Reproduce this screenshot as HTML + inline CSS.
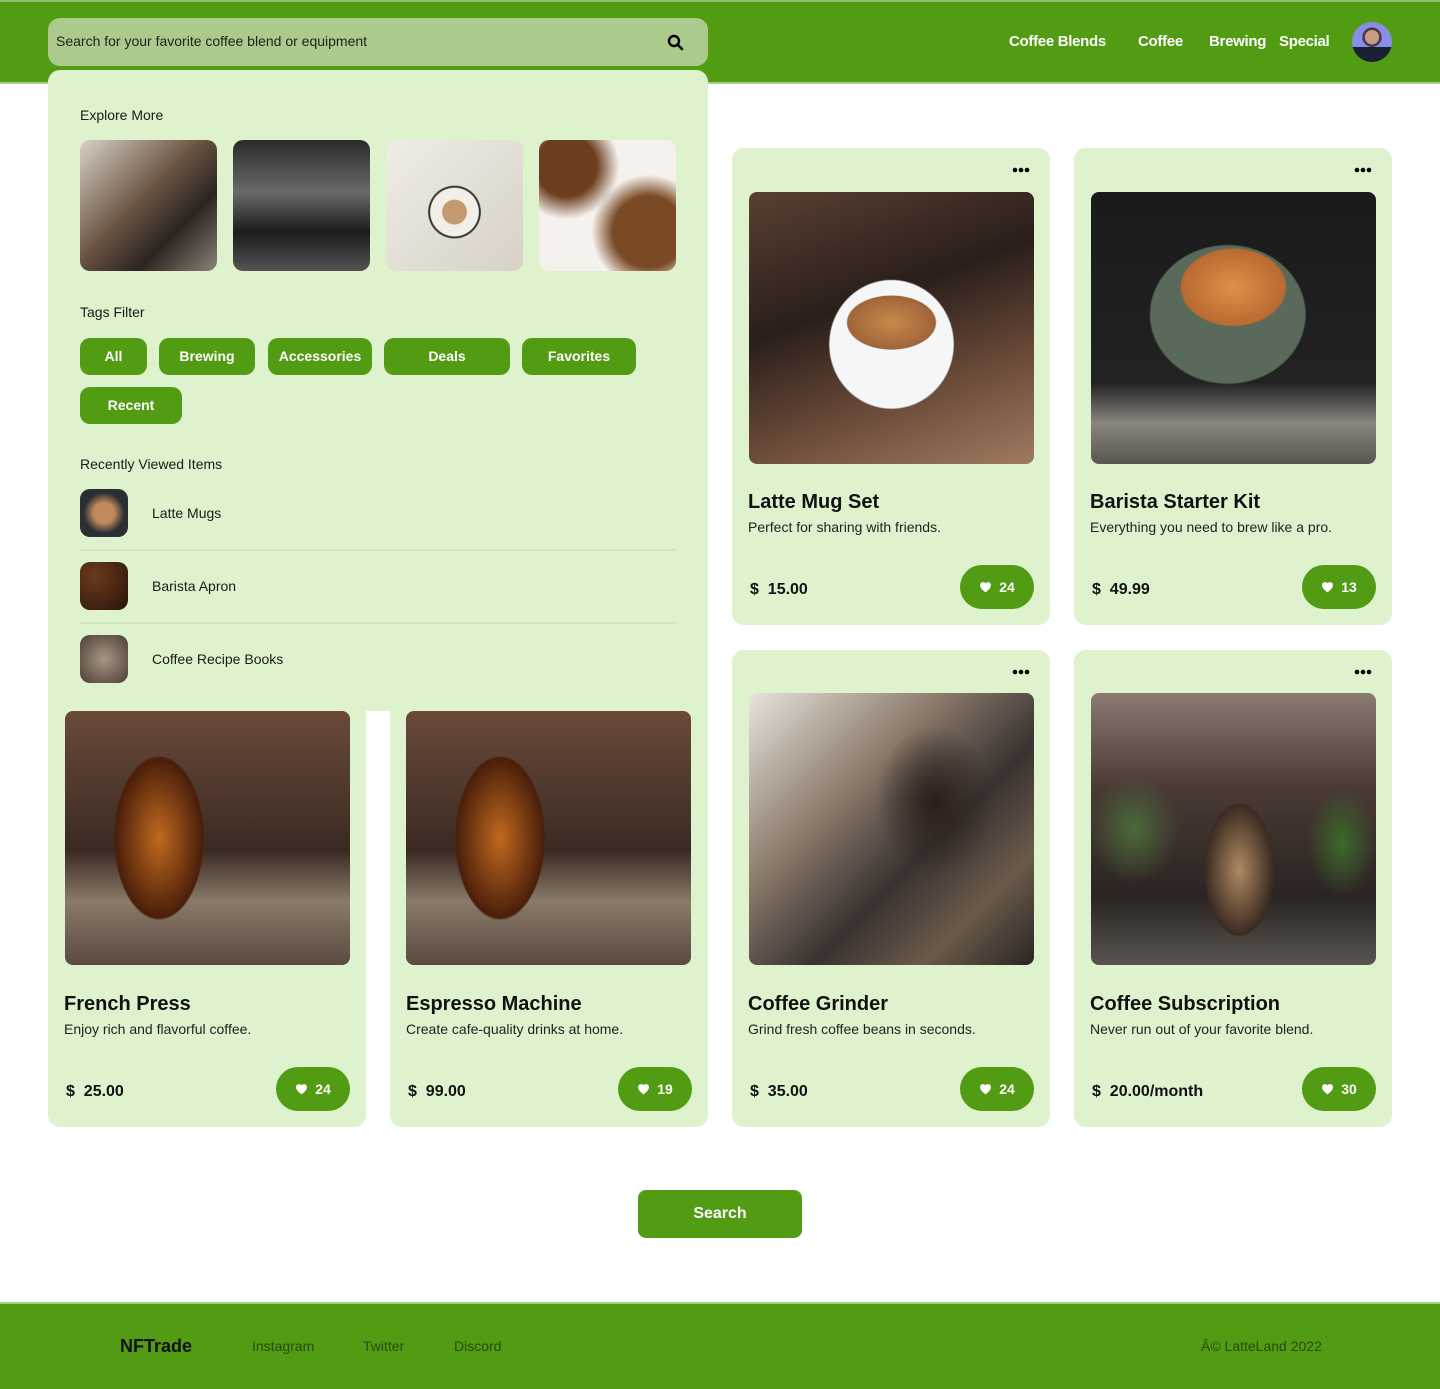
<!DOCTYPE html>
<html><head><meta charset="utf-8"><style>
*{margin:0;padding:0;box-sizing:border-box}
body{width:1440px;height:1389px;position:relative;background:#fff;font-family:"Liberation Sans",Arial,sans-serif;color:#111;overflow:hidden}
.a{position:absolute}
.hdr{left:0;top:0;width:1440px;height:84px;background:#519c13;border-top:2px solid #8fc26a;border-bottom:2px solid #a7cf8a}
.search{left:48px;top:18px;width:660px;height:48px;background:#abca8c;border-radius:12px;font-size:14px;padding:15px 8px;color:#222}
.nav{top:33px;font-size:15px;font-weight:bold;color:#fff;letter-spacing:-0.3px}
.panel{left:48px;top:70px;width:660px;height:641px;background:#def2cd;border-radius:12px 12px 0 0}
.lbl{font-size:14px;color:#1a1a1a}
.ex{width:137px;height:131px;top:140px;border-radius:10px}
.tag{height:37px;background:#519c13;color:#fff;font-weight:bold;font-size:14px;border-radius:10px;text-align:center;line-height:37px}
.rv{left:80px;width:48px;height:48px;border-radius:10px}
.sep{left:80px;width:596px;height:2px;background:#d3e6c3}
.card{width:318px;height:477px;background:#def2cd;border-radius:12px}
.img{left:17px;top:44px;width:285px;height:272px;border-radius:8px}
.dots{right:20px;top:19px}
.t{left:16px;top:343px;font-size:20px;font-weight:bold}
.d{left:16px;top:371px;font-size:14px;color:#222}
.p{left:18px;top:433px;font-size:16px;font-weight:bold;color:#111}
.like{right:16px;top:417px;width:74px;height:44px;border-radius:22px;background:#519c13;color:#fff;font-weight:bold;font-size:14px;display:flex;align-items:center;justify-content:center;gap:7px}
.ft{top:1302px;left:0;width:1440px;height:87px;background:#519c13;border-top:2px solid #a7cf8a}
.fl{top:1338px;font-size:14px;color:#2a4a10}
</style></head><body>
<div class="a hdr"></div>
<div class="a search">Search for your favorite coffee blend or equipment
<svg class="a" style="right:24px;top:16px" width="17" height="17" viewBox="0 0 17 17"><circle cx="7" cy="7" r="5" fill="none" stroke="#000" stroke-width="2.4"/><path d="M10.5 10.5l4.5 4.5" stroke="#000" stroke-width="2.6" stroke-linecap="round"/></svg></div>
<div class="a nav" style="left:1009px">Coffee Blends</div>
<div class="a nav" style="left:1138px">Coffee</div>
<div class="a nav" style="left:1209px">Brewing</div>
<div class="a nav" style="left:1279px">Special</div>
<div class="a" style="left:1352px;top:22px;width:40px;height:40px;border-radius:50%;background:radial-gradient(circle at 50% 38%,#c89a86 0 22%,#4a3a48 23% 30%,transparent 31%),linear-gradient(180deg,#8a8de8 0 62%,#1b1f33 63%)"></div>

<div class="a panel">
<div class="a lbl" style="left:32px;top:37px">Explore More</div>
<div class="a ex" style="left:32px;top:70px;background:linear-gradient(135deg,#d9d2c6,#6b5443 45%,#2b2420 70%,#8a8478)"></div>
<div class="a ex" style="left:185px;top:70px;background:linear-gradient(180deg,#2a2a2a,#6a6a6a 40%,#1b1b1b 70%,#545454)"></div>
<div class="a ex" style="left:338px;top:70px;background:radial-gradient(circle at 50% 55%,#c49a70 0 12%,#f3efe8 13% 24%,#333 25% 26%,transparent 27%),linear-gradient(135deg,#efece6,#d8d2c6)"></div>
<div class="a ex" style="left:491px;top:70px;background:radial-gradient(circle at 80% 70%,#7a4a24 0 25%,transparent 40%),radial-gradient(circle at 20% 20%,#6b3f1e 0 20%,transparent 35%),#f5f2ee"></div>
<div class="a lbl" style="left:32px;top:234px">Tags Filter</div>
<div class="a tag" style="left:32px;top:268px;width:67px">All</div>
<div class="a tag" style="left:111px;top:268px;width:96px">Brewing</div>
<div class="a tag" style="left:220px;top:268px;width:104px">Accessories</div>
<div class="a tag" style="left:336px;top:268px;width:126px">Deals</div>
<div class="a tag" style="left:474px;top:268px;width:114px">Favorites</div>
<div class="a tag" style="left:32px;top:317px;width:102px">Recent</div>
<div class="a lbl" style="left:32px;top:386px">Recently Viewed Items</div>
</div>
<div class="a rv" style="top:489px;background:radial-gradient(circle,#c08a5c 0 30%,#2a2f33 60%)"></div>
<div class="a lbl" style="left:152px;top:505px">Latte Mugs</div>
<div class="a sep" style="top:549px"></div>
<div class="a rv" style="top:562px;background:radial-gradient(circle at 30% 30%,#6b3a1e,#2a140a)"></div>
<div class="a lbl" style="left:152px;top:578px">Barista Apron</div>
<div class="a sep" style="top:622px"></div>
<div class="a rv" style="top:635px;background:radial-gradient(circle,#a89684,#4a3e34)"></div>
<div class="a lbl" style="left:152px;top:651px">Coffee Recipe Books</div>

<div class="a card" style="left:48px;top:650px;clip-path:inset(61px 0 0 0)">
<div class="a img" style="top:61px;height:254px;background:radial-gradient(ellipse 22% 45% at 33% 50%,#c06a1e,#4a1e0a 70%,transparent 72%),linear-gradient(180deg,#6a4a3a,#3a2a22 55%,#8a7a6a 75%,#5a4a40)"></div>
<div class="a t">French Press</div><div class="a d">Enjoy rich and flavorful coffee.</div>
<div class="a p">$ &nbsp;25.00</div><div class="a like"><svg width="13" height="12" viewBox="0 0 24 22"><path d="M12 21l-1.5-1.3C5 15 2 12.2 2 7.5 2 4.4 4.4 2 7.5 2c1.7 0 3.4.8 4.5 2.1C13.1 2.8 14.8 2 16.5 2 19.6 2 22 4.4 22 7.5c0 4.7-3 7.5-8.5 12.2z" fill="#fff"/></svg>24</div></div>
<div class="a card" style="left:390px;top:650px;clip-path:inset(61px 0 0 0)">
<div class="a img" style="left:16px;top:61px;height:254px;background:radial-gradient(ellipse 22% 45% at 33% 50%,#c06a1e,#4a1e0a 70%,transparent 72%),linear-gradient(180deg,#6a4a3a,#3a2a22 55%,#8a7a6a 75%,#5a4a40)"></div>
<div class="a t">Espresso Machine</div><div class="a d">Create cafe-quality drinks at home.</div>
<div class="a p">$ &nbsp;99.00</div><div class="a like"><svg width="13" height="12" viewBox="0 0 24 22"><path d="M12 21l-1.5-1.3C5 15 2 12.2 2 7.5 2 4.4 4.4 2 7.5 2c1.7 0 3.4.8 4.5 2.1C13.1 2.8 14.8 2 16.5 2 19.6 2 22 4.4 22 7.5c0 4.7-3 7.5-8.5 12.2z" fill="#fff"/></svg>19</div></div>

<div class="a card" style="left:732px;top:148px">
<svg class="a dots" width="18" height="6"><circle cx="3" cy="3" r="2.3"/><circle cx="9" cy="3" r="2.3"/><circle cx="15" cy="3" r="2.3"/></svg>
<div class="a img" style="background:radial-gradient(ellipse 22% 14% at 50% 48%,#c88a4a,#a0643a 70%,transparent 72%),radial-gradient(ellipse 24% 26% at 50% 56%,#f4f6f8 0 90%,transparent 92%),linear-gradient(160deg,#5a4032,#2a1e1a 40%,#6a4a38 70%,#a07a60)"></div>
<div class="a t">Latte Mug Set</div><div class="a d">Perfect for sharing with friends.</div>
<div class="a p">$ &nbsp;15.00</div><div class="a like"><svg width="13" height="12" viewBox="0 0 24 22"><path d="M12 21l-1.5-1.3C5 15 2 12.2 2 7.5 2 4.4 4.4 2 7.5 2c1.7 0 3.4.8 4.5 2.1C13.1 2.8 14.8 2 16.5 2 19.6 2 22 4.4 22 7.5c0 4.7-3 7.5-8.5 12.2z" fill="#fff"/></svg>24</div></div>
<div class="a card" style="left:1074px;top:148px">
<svg class="a dots" width="18" height="6"><circle cx="3" cy="3" r="2.3"/><circle cx="9" cy="3" r="2.3"/><circle cx="15" cy="3" r="2.3"/></svg>
<div class="a img" style="background:radial-gradient(ellipse 26% 20% at 50% 35%,#e0904a,#b86a30 70%,transparent 72%),radial-gradient(ellipse 30% 28% at 48% 45%,#5a6a5a 0 90%,transparent 92%),linear-gradient(180deg,#1a1a1a,#222 70%,#8a847e 85%,#5a5550)"></div>
<div class="a t">Barista Starter Kit</div><div class="a d">Everything you need to brew like a pro.</div>
<div class="a p">$ &nbsp;49.99</div><div class="a like"><svg width="13" height="12" viewBox="0 0 24 22"><path d="M12 21l-1.5-1.3C5 15 2 12.2 2 7.5 2 4.4 4.4 2 7.5 2c1.7 0 3.4.8 4.5 2.1C13.1 2.8 14.8 2 16.5 2 19.6 2 22 4.4 22 7.5c0 4.7-3 7.5-8.5 12.2z" fill="#fff"/></svg>13</div></div>
<div class="a card" style="left:732px;top:650px">
<svg class="a dots" width="18" height="6"><circle cx="3" cy="3" r="2.3"/><circle cx="9" cy="3" r="2.3"/><circle cx="15" cy="3" r="2.3"/></svg>
<div class="a img" style="top:43px;background:radial-gradient(ellipse 30% 40% at 65% 40%,#2a1e1a,transparent 70%),linear-gradient(135deg,#e8e4dc,#8a7a6a 35%,#3a3230 60%,#6a5a4a 80%,#2a2522)"></div>
<div class="a t">Coffee Grinder</div><div class="a d">Grind fresh coffee beans in seconds.</div>
<div class="a p">$ &nbsp;35.00</div><div class="a like"><svg width="13" height="12" viewBox="0 0 24 22"><path d="M12 21l-1.5-1.3C5 15 2 12.2 2 7.5 2 4.4 4.4 2 7.5 2c1.7 0 3.4.8 4.5 2.1C13.1 2.8 14.8 2 16.5 2 19.6 2 22 4.4 22 7.5c0 4.7-3 7.5-8.5 12.2z" fill="#fff"/></svg>24</div></div>
<div class="a card" style="left:1074px;top:650px">
<svg class="a dots" width="18" height="6"><circle cx="3" cy="3" r="2.3"/><circle cx="9" cy="3" r="2.3"/><circle cx="15" cy="3" r="2.3"/></svg>
<div class="a img" style="top:43px;background:radial-gradient(ellipse 15% 30% at 52% 65%,#b08a64,#3a2a20 80%,transparent 82%),radial-gradient(ellipse 20% 25% at 15% 50%,#4a6a3a,transparent 80%),radial-gradient(ellipse 15% 25% at 88% 55%,#3a6a2a,transparent 80%),linear-gradient(180deg,#8a7a70,#4a3a34 35%,#2a2422 75%,#5a5450)"></div>
<div class="a t">Coffee Subscription</div><div class="a d">Never run out of your favorite blend.</div>
<div class="a p">$ &nbsp;20.00/month</div><div class="a like"><svg width="13" height="12" viewBox="0 0 24 22"><path d="M12 21l-1.5-1.3C5 15 2 12.2 2 7.5 2 4.4 4.4 2 7.5 2c1.7 0 3.4.8 4.5 2.1C13.1 2.8 14.8 2 16.5 2 19.6 2 22 4.4 22 7.5c0 4.7-3 7.5-8.5 12.2z" fill="#fff"/></svg>30</div></div>

<div class="a" style="left:638px;top:1190px;width:164px;height:48px;background:#519c13;border-radius:8px;color:#fff;font-weight:bold;font-size:16px;text-align:center;line-height:48px">Search</div>

<div class="a ft"></div>
<div class="a" style="left:120px;top:1336px;font-size:18px;font-weight:bold;color:#111">NFTrade</div>
<div class="a fl" style="left:252px">Instagram</div>
<div class="a fl" style="left:363px">Twitter</div>
<div class="a fl" style="left:454px">Discord</div>
<div class="a fl" style="left:1201px">Â© LatteLand 2022</div>
</body></html>
